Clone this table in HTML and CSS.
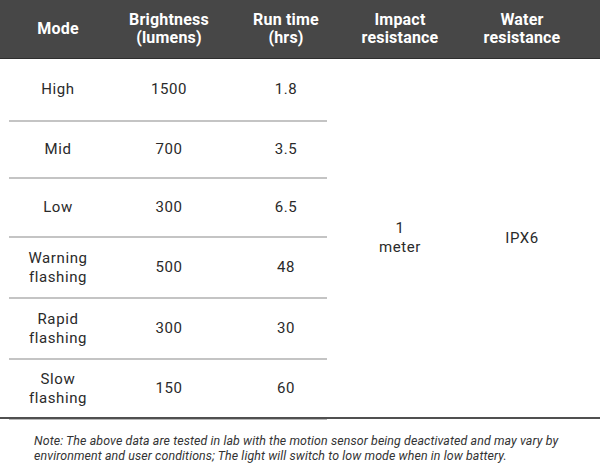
FILE: index.html
```html
<!DOCTYPE html>
<html lang="en">
<head>
<meta charset="utf-8">
<title>Light modes</title>
<link rel="stylesheet" href="styles.css">
</head>
<body>
<div class="spec">
  <div class="head">
    <div class="hc c1">Mode</div>
    <div class="hc c2">Brightness<br>(lumens)</div>
    <div class="hc c3">Run time<br>(hrs)</div>
    <div class="hc c4">Impact<br>resistance</div>
    <div class="hc c5">Water<br>resistance</div>
  </div>
  <div class="body">
    <div class="left">
      <div class="row r1"><div class="cell c1">High</div><div class="cell c2">1500</div><div class="cell c3">1.8</div></div>
      <div class="row r2"><div class="cell c1">Mid</div><div class="cell c2">700</div><div class="cell c3">3.5</div></div>
      <div class="row r3"><div class="cell c1">Low</div><div class="cell c2">300</div><div class="cell c3">6.5</div></div>
      <div class="row r4"><div class="cell c1">Warning<br>flashing</div><div class="cell c2">500</div><div class="cell c3">48</div></div>
      <div class="row r5"><div class="cell c1">Rapid<br>flashing</div><div class="cell c2">300</div><div class="cell c3">30</div></div>
      <div class="row r6"><div class="cell c1">Slow<br>flashing</div><div class="cell c2">150</div><div class="cell c3">60</div></div>
    </div>
    <div class="cell c4 tall">1<br>meter</div>
    <div class="cell c5 tall">IPX6</div>
  </div>
  <div class="foot-rule"></div>
  <p class="note">Note: The above data are tested in lab with the motion sensor being deactivated and may vary by<br>environment and user conditions; The light will switch to low mode when in low battery.</p>
</div>
</body>
</html>
```

FILE: styles.css
```css
html, body {
  margin: 0;
  padding: 0;
  background: #ffffff;
}
body {
  font-family: Roboto, "Liberation Sans", sans-serif;
  color: #2a2a2a;
  width: 600px;
}
.spec {
  display: flex;
  flex-direction: column;
}
.head {
  display: flex;
  align-items: center;
  height: 58px;
  padding-left: 9px;
  background: #474747;
  border-bottom: 1px solid #2e2e2e;
  color: #ffffff;
}
.hc {
  font-weight: 700;
  font-size: 16px;
  line-height: 18px;
  letter-spacing: 0.2px;
  text-align: center;
}
.c1 { width: 98px; }
.c2 { width: 124px; }
.c3 { width: 96px; padding-left: 14px; box-sizing: border-box; }
.c4 { width: 146px; }
.c5 { width: 98px; }
.body {
  display: flex;
  border-bottom: 2px solid #505050;
}
.left {
  margin-left: 9px;
  width: 318px;
  display: flex;
  flex-direction: column;
}
.row {
  display: flex;
  align-items: center;
  border-bottom: 2px solid #c4c4c4;
}
.r1 { height: 61px; }
.r2 { height: 55px; }
.r3 { height: 57px; }
.r4 { height: 59px; }
.r5 { height: 59px; }
.r6 { height: 57px; border-bottom: none; }
.cell {
  font-size: 15px;
  line-height: 19px;
  letter-spacing: 0.6px;
  text-align: center;
}
.tall {
  display: flex;
  align-items: center;
  justify-content: center;
}
.foot-rule {
  margin-left: 9px;
  width: 318px;
  height: 1px;
  background: #b8b8b8;
}
.note {
  margin: 13px 0 0 34px;
  font-size: 12.4px;
  line-height: 15px;
  font-style: italic;
  color: #333333;
  letter-spacing: 0.1px;
}
```
